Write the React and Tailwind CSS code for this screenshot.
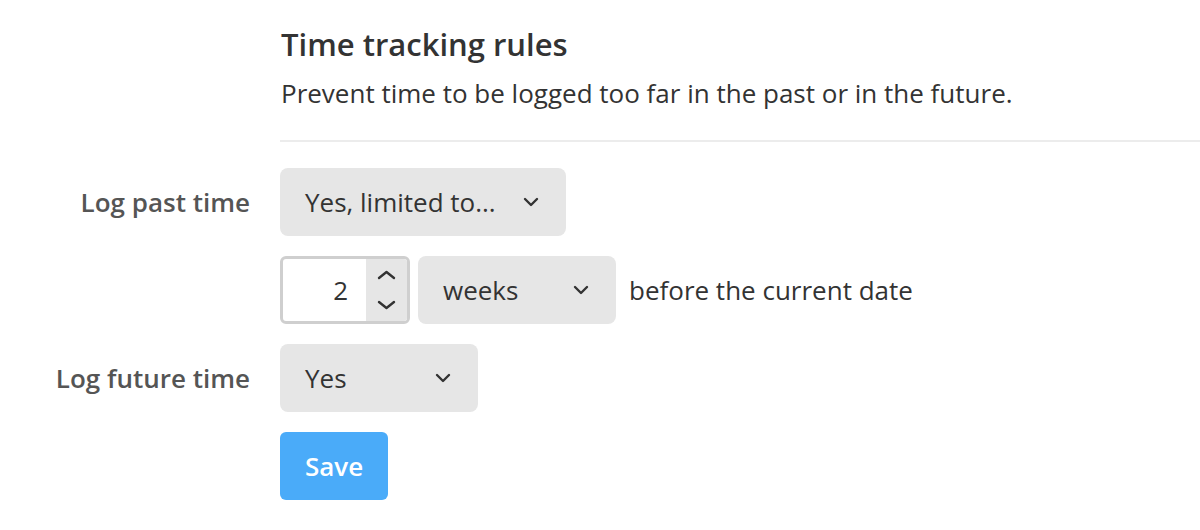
import React from "react";

function Chevron({ up = false, w = 16 }) {
  const h = 10;
  const m = w / 2;
  return (
    <svg width={w} height={h} viewBox={`0 0 ${w} ${h}`} fill="none" className="shrink-0">
      <path
        d={up ? `M2 8 L${m} 2 L${w - 2} 8` : `M2 2 L${m} 8 L${w - 2} 2`}
        stroke="#333"
        strokeWidth="2.4"
        strokeLinecap="round"
        strokeLinejoin="round"
      />
    </svg>
  );
}

function Select({ value, width }) {
  return (
    <div
      className={`h-[68px] rounded-lg bg-[#e6e6e6] pl-[25px] pr-[27px] flex items-center justify-between text-[26px] text-[#333] ${width}`}
    >
      <span>{value}</span>
      <Chevron />
    </div>
  );
}

export default function App() {
  return (
    <div
      className="w-[1200px] h-[530px] bg-white overflow-hidden text-[#333]"
      style={{ fontFamily: '"Open Sans", "Liberation Sans", sans-serif' }}
    >
      <div className="pl-[280px] pt-[23px]">
        <h1 className="text-[31px] font-semibold leading-[42px] pl-[1px] text-[#333]">
          Time tracking rules
        </h1>
        <p className="mt-[10px] text-[26px] leading-[36px] pl-[1px] text-[#333]">
          Prevent time to be logged too far in the past or in the future.
        </p>
        <div className="mt-[29px] h-[2px] bg-[#ececec]" />
      </div>

      <div className="mt-[26px] grid grid-cols-[250px_1fr] gap-x-[30px] gap-y-[20px] items-center">
        <div className="text-right text-[26px] font-semibold text-[#555]">Log past time</div>
        <div>
          <Select value="Yes, limited to..." width="w-[286px]" />
        </div>

        <div />
        <div className="flex items-center">
          <div className="h-[68px] w-[130px] rounded-md border-[3px] border-[#cfcfcf] bg-white flex overflow-hidden">
            <div className="flex-1 flex items-center justify-end pr-[18px] text-[26px] text-[#333]">2</div>
            <div className="w-[41px] bg-[#e6e6e6] flex flex-col items-center justify-center gap-[20px]">
              <Chevron up w={19} />
              <Chevron w={19} />
            </div>
          </div>
          <div className="ml-[8px]">
            <Select value="weeks" width="w-[198px]" />
          </div>
          <span className="ml-[13px] text-[26px] text-[#333]">before the current date</span>
        </div>

        <div className="text-right text-[26px] font-semibold text-[#555]">Log future time</div>
        <div>
          <Select value="Yes" width="w-[198px]" />
        </div>

        <div />
        <div>
          <button className="h-[68px] w-[108px] rounded-md bg-[#4aabf9] text-white text-[26px] font-semibold">
            Save
          </button>
        </div>
      </div>
    </div>
  );
}
